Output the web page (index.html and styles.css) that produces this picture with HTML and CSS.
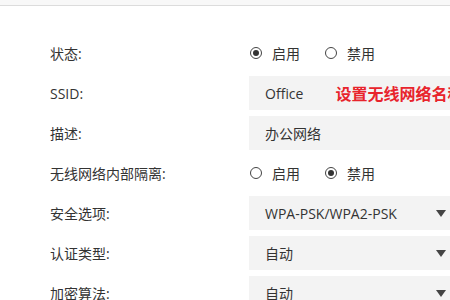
FILE: index.html
```html
<!DOCTYPE html>
<html lang="zh-CN">

<head>
    <meta charset="UTF-8">
    <title>无线设置</title>
    <link rel="stylesheet" href="styles.css">
</head>

<body>
    <div class="topbar"></div>
    <div class="form">
        <div class="row">
            <label>状态:</label>
            <div class="radios">
                <span class="radio checked"></span><span class="opt">启用</span>
                <span class="radio"></span><span class="opt">禁用</span>
            </div>
        </div>

        <div class="row">
            <label>SSID:</label>
            <div class="field">
                <span class="value">Office</span>
                <span class="hint">设置无线网络名称</span>
            </div>
        </div>

        <div class="row">
            <label>描述:</label>
            <div class="field">
                <span class="value">办公网络</span>
            </div>
        </div>

        <div class="row">
            <label>无线网络内部隔离:</label>
            <div class="radios">
                <span class="radio"></span><span class="opt">启用</span>
                <span class="radio checked"></span><span class="opt">禁用</span>
            </div>
        </div>

        <div class="row">
            <label>安全选项:</label>
            <div class="field select">
                <span class="value">WPA-PSK/WPA2-PSK</span>
                <span class="arrow"></span>
            </div>
        </div>

        <div class="row">
            <label>认证类型:</label>
            <div class="field select">
                <span class="value">自动</span>
                <span class="arrow"></span>
            </div>
        </div>

        <div class="row">
            <label>加密算法:</label>
            <div class="field select">
                <span class="value">自动</span>
                <span class="arrow"></span>
            </div>
        </div>
    </div>
</body>

</html>
```

FILE: styles.css
```css
body {
    margin: 0;
    font-family: "Open Sans", "Noto Sans CJK SC", sans-serif;
    background-color: #ffffff;
    color: #333;
    overflow: hidden;
    width: 450px;
}

.topbar {
    height: 5px;
    background-color: #f8f8f8;
    border-bottom: 1px solid #dcdcdc;
}

.form {
    padding-top: 27px;
    padding-left: 50px;
}

.row {
    display: flex;
    align-items: center;
    height: 40px;
}

.row label {
    width: 199px;
    flex-shrink: 0;
    font-size: 14px;
}

.radios {
    display: flex;
    align-items: center;
    font-size: 14px;
    padding-left: 1px;
}

.radio {
    width: 10px;
    height: 10px;
    border: 1px solid #444;
    border-radius: 50%;
    position: relative;
    margin-right: 10px;
}

.radio.checked::after {
    content: "";
    position: absolute;
    left: 2px;
    top: 2px;
    width: 6px;
    height: 6px;
    border-radius: 50%;
    background-color: #333;
}

.opt {
    margin-right: 25px;
}

.field {
    display: flex;
    align-items: center;
    width: 210px;
    flex-shrink: 0;
    height: 34px;
    padding-left: 16px;
    background-color: #f3f3f3;
    font-size: 14px;
    white-space: nowrap;
}

.hint {
    margin-left: 32px;
    color: #e8242c;
    font-size: 16px;
    font-weight: 700;
}

.select {
    position: relative;
}

.arrow {
    position: absolute;
    left: 187px;
    top: 14px;
    width: 0;
    height: 0;
    border-left: 5px solid transparent;
    border-right: 5px solid transparent;
    border-top: 7px solid #444;
}
```
